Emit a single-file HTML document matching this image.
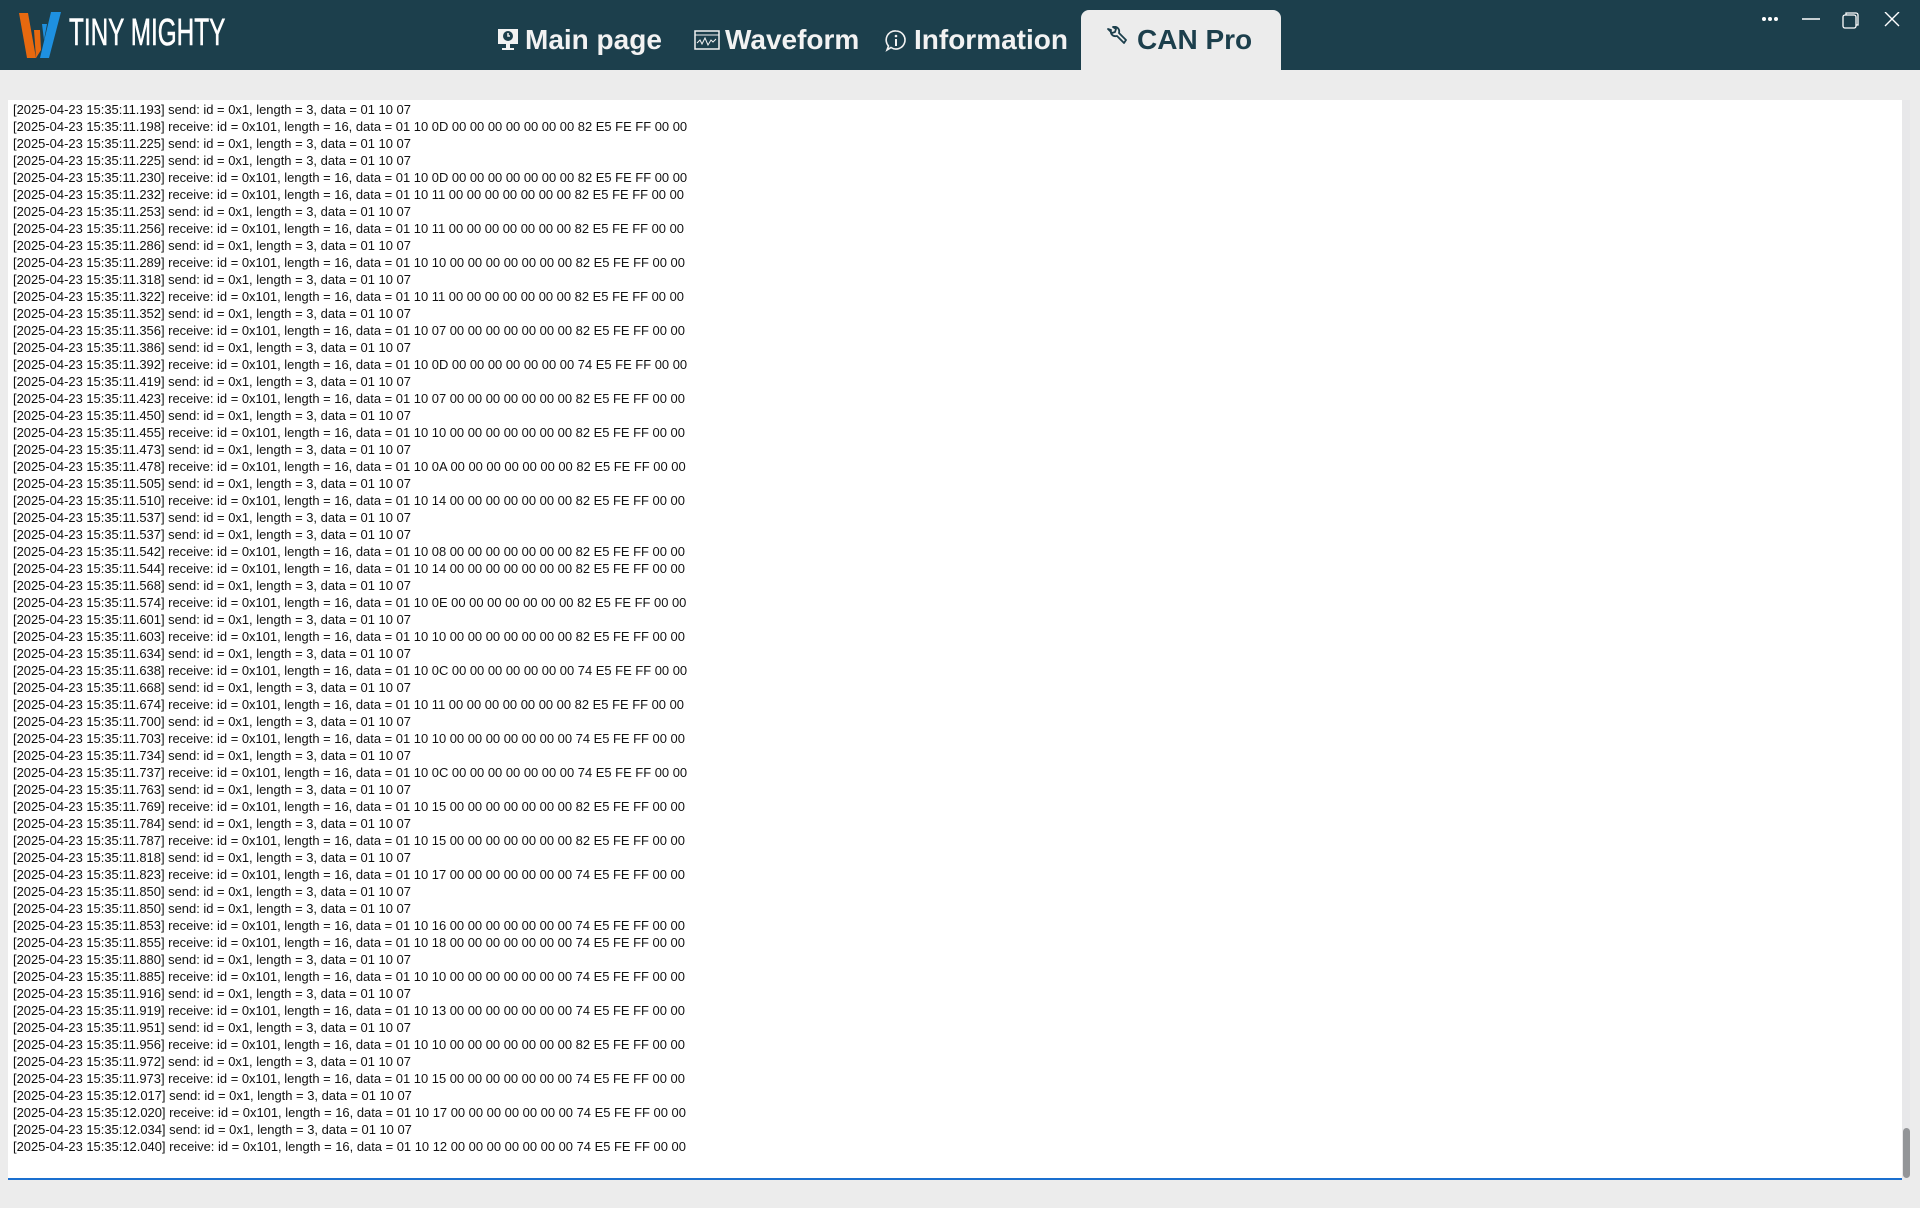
<!DOCTYPE html>
<html><head><meta charset="utf-8"><style>
html,body{margin:0;padding:0;width:1920px;height:1208px;overflow:hidden;background:#ececec;font-family:"Liberation Sans",sans-serif;}
.hdr{position:absolute;left:0;top:0;width:1920px;height:70px;background:#1c3f4c;}
.logo{position:absolute;left:14px;top:10px;}
.brand{position:absolute;left:69px;top:13px;color:#fff;font-size:38px;transform:scaleX(0.64);transform-origin:left top;letter-spacing:0px;white-space:nowrap;line-height:40px;-webkit-text-stroke:0.6px #fff;}
.tab{position:absolute;top:20px;color:#f2f2f2;font-weight:bold;font-size:28px;line-height:40px;white-space:nowrap;}
.tab svg{position:absolute;}
.active{position:absolute;left:1081px;top:10px;width:200px;height:60px;background:#ececec;border-radius:8px 8px 0 0;}
.log{position:absolute;left:8px;top:100px;width:1894px;height:1078px;background:#fff;border-bottom:2px solid #1a6fcf;}
.sb{position:absolute;left:1902px;top:100px;width:8px;height:1080px;background:#e8e8ea;}
.thumb{position:absolute;left:1903px;top:1128px;width:7px;height:50px;background:#939598;border-radius:4px;}
pre{margin:0;position:absolute;left:13px;top:101px;font-family:"Liberation Sans",sans-serif;font-size:12.95px;line-height:17px;color:#111;}
</style></head><body>
<div class="hdr">
<svg class="logo" width="50" height="50" viewBox="0 0 50 50"><polygon points="5,3 14,3 22,48 13,48" fill="#e8690f"/><polygon points="20,20 26,20 27,40 22,48" fill="#e8690f"/><polygon points="37,2 47,2 35,48 26,48" fill="#1e90e0"/><polygon points="28,14 33,14 30,30" fill="#1e90e0"/></svg>
<div class="brand">TINY MIGHTY</div>
<div class="active"></div>
<div class="tab" style="left:496px"><svg style="left:0;top:8px" width="24" height="24" viewBox="0 0 24 24"><rect x="2" y="1" width="20" height="15" fill="#f2f2f2"/><circle cx="12" cy="8" r="5" fill="#1c3f4c"/><path d="M12 5v3h2" stroke="#f2f2f2" stroke-width="1.5" fill="none"/><rect x="10" y="16" width="4" height="4" fill="#f2f2f2"/><rect x="6" y="20" width="12" height="2" fill="#f2f2f2"/></svg><span style="position:absolute;left:29px">Main page</span></div>
<div class="tab" style="left:694px"><svg style="left:0;top:9px" width="26" height="22" viewBox="0 0 26 22"><rect x="1" y="2" width="24" height="18" fill="none" stroke="#f2f2f2" stroke-width="1.5"/><line x1="1" y1="6" x2="25" y2="6" stroke="#f2f2f2"/><path d="M3 14l3-3 2 4 3-6 3 7 3-5 2 2 3-3" stroke="#f2f2f2" fill="none"/></svg><span style="position:absolute;left:31px">Waveform</span></div>
<div class="tab" style="left:884px"><svg style="left:0;top:9px" width="24" height="24" viewBox="0 0 24 24"><path d="M12 2a9 9 0 1 1-5 16.5L3 21l1.5-4A9 9 0 0 1 12 2z" fill="none" stroke="#f2f2f2" stroke-width="1.6"/><circle cx="12" cy="7" r="1.3" fill="#f2f2f2"/><rect x="11" y="10" width="2" height="7" fill="#f2f2f2"/></svg><span style="position:absolute;left:30px">Information</span></div>
<div class="tab" style="left:1104px;color:#1c3f4c"><svg style="left:0;top:6px" width="24" height="24" viewBox="0 0 24 24"><path d="M4 3l4 4 3-1 1-3-3-2c4-1 7 2 6 6l7 7-2 3-7-7c-4 1-7-2-6-6z" fill="none" stroke="#1c3f4c" stroke-width="1.8" stroke-linejoin="round"/></svg><span style="position:absolute;left:33px">CAN Pro</span></div>
<svg style="position:absolute;left:1760px;top:12px" width="150" height="30" viewBox="0 0 150 30">
<circle cx="4" cy="7" r="2" fill="#fff"/><circle cx="10" cy="7" r="2" fill="#fff"/><circle cx="16" cy="7" r="2" fill="#fff"/>
<line x1="42" y1="7" x2="60" y2="7" stroke="#fff" stroke-width="1.6"/>
<rect x="83" y="3" width="13" height="13" rx="2" fill="none" stroke="#fff" stroke-width="1.3"/><path d="M86 3V1h10a2 2 0 0 1 2 2v10h-2" fill="none" stroke="#fff" stroke-width="1.3"/>
<path d="M125 0l14 14M139 0l-14 14" stroke="#fff" stroke-width="1.4"/>
</svg>
</div>
<div class="log"></div>
<div class="sb"></div><div class="thumb"></div>
<pre>[2025-04-23 15:35:11.193] send: id = 0x1, length = 3, data = 01 10 07
[2025-04-23 15:35:11.198] receive: id = 0x101, length = 16, data = 01 10 0D 00 00 00 00 00 00 00 82 E5 FE FF 00 00
[2025-04-23 15:35:11.225] send: id = 0x1, length = 3, data = 01 10 07
[2025-04-23 15:35:11.225] send: id = 0x1, length = 3, data = 01 10 07
[2025-04-23 15:35:11.230] receive: id = 0x101, length = 16, data = 01 10 0D 00 00 00 00 00 00 00 82 E5 FE FF 00 00
[2025-04-23 15:35:11.232] receive: id = 0x101, length = 16, data = 01 10 11 00 00 00 00 00 00 00 82 E5 FE FF 00 00
[2025-04-23 15:35:11.253] send: id = 0x1, length = 3, data = 01 10 07
[2025-04-23 15:35:11.256] receive: id = 0x101, length = 16, data = 01 10 11 00 00 00 00 00 00 00 82 E5 FE FF 00 00
[2025-04-23 15:35:11.286] send: id = 0x1, length = 3, data = 01 10 07
[2025-04-23 15:35:11.289] receive: id = 0x101, length = 16, data = 01 10 10 00 00 00 00 00 00 00 82 E5 FE FF 00 00
[2025-04-23 15:35:11.318] send: id = 0x1, length = 3, data = 01 10 07
[2025-04-23 15:35:11.322] receive: id = 0x101, length = 16, data = 01 10 11 00 00 00 00 00 00 00 82 E5 FE FF 00 00
[2025-04-23 15:35:11.352] send: id = 0x1, length = 3, data = 01 10 07
[2025-04-23 15:35:11.356] receive: id = 0x101, length = 16, data = 01 10 07 00 00 00 00 00 00 00 82 E5 FE FF 00 00
[2025-04-23 15:35:11.386] send: id = 0x1, length = 3, data = 01 10 07
[2025-04-23 15:35:11.392] receive: id = 0x101, length = 16, data = 01 10 0D 00 00 00 00 00 00 00 74 E5 FE FF 00 00
[2025-04-23 15:35:11.419] send: id = 0x1, length = 3, data = 01 10 07
[2025-04-23 15:35:11.423] receive: id = 0x101, length = 16, data = 01 10 07 00 00 00 00 00 00 00 82 E5 FE FF 00 00
[2025-04-23 15:35:11.450] send: id = 0x1, length = 3, data = 01 10 07
[2025-04-23 15:35:11.455] receive: id = 0x101, length = 16, data = 01 10 10 00 00 00 00 00 00 00 82 E5 FE FF 00 00
[2025-04-23 15:35:11.473] send: id = 0x1, length = 3, data = 01 10 07
[2025-04-23 15:35:11.478] receive: id = 0x101, length = 16, data = 01 10 0A 00 00 00 00 00 00 00 82 E5 FE FF 00 00
[2025-04-23 15:35:11.505] send: id = 0x1, length = 3, data = 01 10 07
[2025-04-23 15:35:11.510] receive: id = 0x101, length = 16, data = 01 10 14 00 00 00 00 00 00 00 82 E5 FE FF 00 00
[2025-04-23 15:35:11.537] send: id = 0x1, length = 3, data = 01 10 07
[2025-04-23 15:35:11.537] send: id = 0x1, length = 3, data = 01 10 07
[2025-04-23 15:35:11.542] receive: id = 0x101, length = 16, data = 01 10 08 00 00 00 00 00 00 00 82 E5 FE FF 00 00
[2025-04-23 15:35:11.544] receive: id = 0x101, length = 16, data = 01 10 14 00 00 00 00 00 00 00 82 E5 FE FF 00 00
[2025-04-23 15:35:11.568] send: id = 0x1, length = 3, data = 01 10 07
[2025-04-23 15:35:11.574] receive: id = 0x101, length = 16, data = 01 10 0E 00 00 00 00 00 00 00 82 E5 FE FF 00 00
[2025-04-23 15:35:11.601] send: id = 0x1, length = 3, data = 01 10 07
[2025-04-23 15:35:11.603] receive: id = 0x101, length = 16, data = 01 10 10 00 00 00 00 00 00 00 82 E5 FE FF 00 00
[2025-04-23 15:35:11.634] send: id = 0x1, length = 3, data = 01 10 07
[2025-04-23 15:35:11.638] receive: id = 0x101, length = 16, data = 01 10 0C 00 00 00 00 00 00 00 74 E5 FE FF 00 00
[2025-04-23 15:35:11.668] send: id = 0x1, length = 3, data = 01 10 07
[2025-04-23 15:35:11.674] receive: id = 0x101, length = 16, data = 01 10 11 00 00 00 00 00 00 00 82 E5 FE FF 00 00
[2025-04-23 15:35:11.700] send: id = 0x1, length = 3, data = 01 10 07
[2025-04-23 15:35:11.703] receive: id = 0x101, length = 16, data = 01 10 10 00 00 00 00 00 00 00 74 E5 FE FF 00 00
[2025-04-23 15:35:11.734] send: id = 0x1, length = 3, data = 01 10 07
[2025-04-23 15:35:11.737] receive: id = 0x101, length = 16, data = 01 10 0C 00 00 00 00 00 00 00 74 E5 FE FF 00 00
[2025-04-23 15:35:11.763] send: id = 0x1, length = 3, data = 01 10 07
[2025-04-23 15:35:11.769] receive: id = 0x101, length = 16, data = 01 10 15 00 00 00 00 00 00 00 82 E5 FE FF 00 00
[2025-04-23 15:35:11.784] send: id = 0x1, length = 3, data = 01 10 07
[2025-04-23 15:35:11.787] receive: id = 0x101, length = 16, data = 01 10 15 00 00 00 00 00 00 00 82 E5 FE FF 00 00
[2025-04-23 15:35:11.818] send: id = 0x1, length = 3, data = 01 10 07
[2025-04-23 15:35:11.823] receive: id = 0x101, length = 16, data = 01 10 17 00 00 00 00 00 00 00 74 E5 FE FF 00 00
[2025-04-23 15:35:11.850] send: id = 0x1, length = 3, data = 01 10 07
[2025-04-23 15:35:11.850] send: id = 0x1, length = 3, data = 01 10 07
[2025-04-23 15:35:11.853] receive: id = 0x101, length = 16, data = 01 10 16 00 00 00 00 00 00 00 74 E5 FE FF 00 00
[2025-04-23 15:35:11.855] receive: id = 0x101, length = 16, data = 01 10 18 00 00 00 00 00 00 00 74 E5 FE FF 00 00
[2025-04-23 15:35:11.880] send: id = 0x1, length = 3, data = 01 10 07
[2025-04-23 15:35:11.885] receive: id = 0x101, length = 16, data = 01 10 10 00 00 00 00 00 00 00 74 E5 FE FF 00 00
[2025-04-23 15:35:11.916] send: id = 0x1, length = 3, data = 01 10 07
[2025-04-23 15:35:11.919] receive: id = 0x101, length = 16, data = 01 10 13 00 00 00 00 00 00 00 74 E5 FE FF 00 00
[2025-04-23 15:35:11.951] send: id = 0x1, length = 3, data = 01 10 07
[2025-04-23 15:35:11.956] receive: id = 0x101, length = 16, data = 01 10 10 00 00 00 00 00 00 00 82 E5 FE FF 00 00
[2025-04-23 15:35:11.972] send: id = 0x1, length = 3, data = 01 10 07
[2025-04-23 15:35:11.973] receive: id = 0x101, length = 16, data = 01 10 15 00 00 00 00 00 00 00 74 E5 FE FF 00 00
[2025-04-23 15:35:12.017] send: id = 0x1, length = 3, data = 01 10 07
[2025-04-23 15:35:12.020] receive: id = 0x101, length = 16, data = 01 10 17 00 00 00 00 00 00 00 74 E5 FE FF 00 00
[2025-04-23 15:35:12.034] send: id = 0x1, length = 3, data = 01 10 07
[2025-04-23 15:35:12.040] receive: id = 0x101, length = 16, data = 01 10 12 00 00 00 00 00 00 00 74 E5 FE FF 00 00</pre>
</body></html>
